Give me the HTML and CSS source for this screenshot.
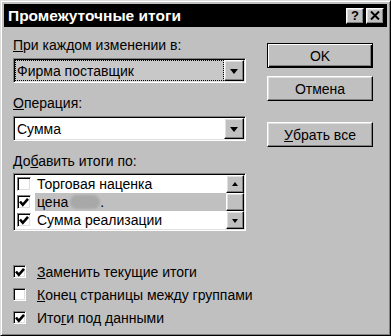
FILE: index.html
```html
<!DOCTYPE html>
<html>
<head>
  <title>Промежуточные итоги</title>
  <link rel="stylesheet" href="styles.css">
</head>
<body>
  <div class="window">
    <div class="titlebar">
      <span class="title">Промежуточные итоги</span>
      <div class="title-buttons">
        <div class="tbtn help">?</div>
        <div class="tbtn">
          <svg width="10" height="9" viewBox="0 0 10 9"><path d="M1 0.5 L9 8.5 M9 0.5 L1 8.5" stroke="#000" stroke-width="2"/></svg>
        </div>
      </div>
    </div>

    <div class="content">
      <div class="left">
        <div class="label"><u>П</u>ри каждом изменении в:</div>
        <div class="field combo">
          <div class="combo-text focused"><span>Фирма поставщик</span></div>
          <div class="raised drop"><span class="arrow-down"></span></div>
        </div>

        <div class="label gap"><u>О</u>перация:</div>
        <div class="field combo">
          <div class="combo-text white">Сумма</div>
          <div class="raised drop"><span class="arrow-down"></span></div>
        </div>

        <div class="label gap">До<u>б</u>авить итоги по:</div>
        <div class="field listbox">
          <div class="rows">
            <div class="row">
              <span class="check"></span>
              <span class="row-text">Торговая наценка</span>
            </div>
            <div class="row">
              <span class="check"><svg width="10" height="10" viewBox="0 0 10 10"><polyline points="1,4.5 3.8,7.8 9,1.8" fill="none" stroke="#000" stroke-width="2.6"/></svg></span>
              <span class="row-text selected">цена<span class="blur"></span>.</span>
            </div>
            <div class="row">
              <span class="check"><svg width="10" height="10" viewBox="0 0 10 10"><polyline points="1,4.5 3.8,7.8 9,1.8" fill="none" stroke="#000" stroke-width="2.6"/></svg></span>
              <span class="row-text">Сумма реализации</span>
            </div>
          </div>
          <div class="scrollbar">
            <div class="raised sbtn"><span class="arrow-up"></span></div>
            <div class="raised thumb"></div>
            <div class="raised sbtn"><span class="arrow-down small"></span></div>
          </div>
        </div>
      </div>

      <div class="right">
        <div class="button default">OK</div>
        <div class="button">Отмена</div>
        <div class="button spaced"><u>У</u>брать все</div>
      </div>
    </div>

    <div class="options">
      <div class="option">
        <span class="check"><svg width="10" height="10" viewBox="0 0 10 10"><polyline points="1,4.5 3.8,7.8 9,1.8" fill="none" stroke="#000" stroke-width="2.6"/></svg></span>
        <span><u>З</u>аменить текущие итоги</span>
      </div>
      <div class="option">
        <span class="check"></span>
        <span><u>К</u>онец страницы между группами</span>
      </div>
      <div class="option">
        <span class="check"><svg width="10" height="10" viewBox="0 0 10 10"><polyline points="1,4.5 3.8,7.8 9,1.8" fill="none" stroke="#000" stroke-width="2.6"/></svg></span>
        <span>Ито<u>г</u>и под данными</span>
      </div>
    </div>
  </div>
</body>
</html>
```

FILE: styles.css
```css
body {
  margin: 0;
  background-color: #c0c0c0;
  font-family: "Liberation Sans", Arial, sans-serif;
  font-size: 14px;
  color: #000000;
}

.window {
  box-sizing: border-box;
  width: 391px;
  height: 336px;
  background-color: #c0c0c0;
  border: 1px solid;
  border-color: #dfdfdf #000000 #000000 #dfdfdf;
  box-shadow: inset 1px 1px #ffffff, inset -1px -1px #808080;
  padding: 3px;
  display: flex;
  flex-direction: column;
}

.titlebar {
  height: 23px;
  background-color: #000000;
  color: #ffffff;
  display: flex;
  align-items: center;
  justify-content: space-between;
  padding: 0 3px 0 4px;
}

.title {
  font-weight: bold;
  font-size: 15.5px;
}

.title-buttons {
  display: flex;
  gap: 2px;
}

.tbtn,
.raised {
  box-sizing: border-box;
  background-color: #c0c0c0;
  border: 1px solid;
  border-color: #ffffff #000000 #000000 #ffffff;
  box-shadow: inset -1px -1px #808080, inset 1px 1px #dfdfdf;
  display: flex;
  align-items: center;
  justify-content: center;
}

.tbtn {
  width: 18px;
  height: 16px;
  color: #000000;
  font-weight: bold;
  font-size: 13px;
}

.content {
  display: flex;
  padding: 10px 0 0 9px;
}

.left {
  width: 233px;
}

.label {
  height: 16px;
  line-height: 16px;
  margin-bottom: 5px;
}

.label.gap {
  margin-top: 12px;
}

.field {
  box-sizing: border-box;
  border: 1px solid;
  border-color: #808080 #ffffff #ffffff #808080;
  box-shadow: inset 1px 1px #000000, inset -1px -1px #dfdfdf;
  padding: 1px;
}

.combo {
  height: 25px;
  display: flex;
}

.combo-text {
  flex: 1;
  display: flex;
  align-items: center;
  padding-left: 2px;
}

.combo-text.white {
  background-color: #ffffff;
}

.combo-text.focused {
  background-color: #c8c8c8;
  outline: 1px dotted #000000;
  outline-offset: -1px;
}

.drop {
  width: 20px;
  height: 21px;
}

.arrow-down {
  width: 0;
  height: 0;
  border-left: 4px solid transparent;
  border-right: 4px solid transparent;
  border-top: 5px solid #000000;
  margin-top: 1px;
}

.arrow-up {
  width: 0;
  height: 0;
  border-left: 3px solid transparent;
  border-right: 3px solid transparent;
  border-bottom: 4px solid #000000;
}

.arrow-down.small {
  border-left-width: 3px;
  border-right-width: 3px;
  border-top-width: 4px;
}

.listbox {
  margin-top: -1px;
  height: 58px;
  display: flex;
  background-color: #ffffff;
}

.rows {
  flex: 1;
}

.row {
  height: 18px;
  display: flex;
  align-items: center;
  padding-left: 2px;
}

.check {
  box-sizing: border-box;
  width: 14px;
  height: 14px;
  flex-shrink: 0;
  background-color: #ffffff;
  border: 1px solid;
  border-color: #808080 #ffffff #ffffff #808080;
  box-shadow: inset 1px 1px #000000, inset -1px -1px #dfdfdf;
  display: flex;
  align-items: center;
  justify-content: center;
}

.row-text {
  flex: 1;
  height: 18px;
  line-height: 18px;
  margin-left: 4px;
  padding-left: 2px;
  display: flex;
  align-items: center;
}

.row-text.selected {
  background-color: #c0c0c0;
}

.blur {
  display: inline-block;
  width: 30px;
  height: 14px;
  margin-left: 2px;
  border-radius: 7px;
  background-color: #a8a8a8;
  filter: blur(1px);
}

.scrollbar {
  width: 18px;
  display: flex;
  flex-direction: column;
}

.sbtn,
.thumb {
  width: 18px;
  height: 18px;
}

.right {
  width: 106px;
  margin-left: 21px;
  padding-top: 6px;
  display: flex;
  flex-direction: column;
  gap: 8px;
}

.button {
  box-sizing: border-box;
  height: 25px;
  display: flex;
  align-items: center;
  justify-content: center;
  border: 1px solid;
  border-color: #ffffff #000000 #000000 #ffffff;
  box-shadow: inset -1px -1px #808080, inset 1px 1px #dfdfdf;
}

.button.default {
  border-color: #000000;
  box-shadow: inset 1px 1px #ffffff, inset -1px -1px #000000, inset -2px -2px #808080;
}

.button.spaced {
  margin-top: 13px;
}

.options {
  margin-top: 29px;
  padding-left: 9px;
}

.option {
  height: 23px;
  display: flex;
  align-items: center;
}

.option .check {
  width: 13px;
  height: 13px;
  margin-right: 11px;
}
```
